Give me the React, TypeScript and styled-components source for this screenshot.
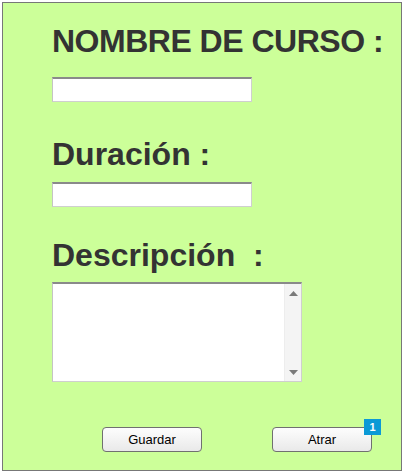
import React from 'react';
import styled, { createGlobalStyle } from 'styled-components';

const GlobalStyle = createGlobalStyle`
  body {
    margin: 0;
    background: #ffffff;
    font-family: "Liberation Sans", Arial, sans-serif;
  }
`;

const Frame = styled.div`
  margin: 2px;
  width: 400px;
  height: 469px;
  box-sizing: border-box;
  border: 1px solid #777777;
  background-color: #ccff99;
  padding: 20px 0 0 49px;
  display: flex;
  flex-direction: column;
  align-items: flex-start;
`;

const Label = styled.h2<{ $top: number; $tight?: boolean }>`
  margin: ${(p) => p.$top}px 0 0 0;
  font-size: 32px;
  line-height: 37px;
  font-weight: 700;
  color: #333333;
  white-space: pre;
  letter-spacing: ${(p) => (p.$tight ? '-0.5px' : '0')};
`;

const TextInput = styled.input<{ $top: number }>`
  margin-top: ${(p) => p.$top}px;
  width: 200px;
  height: 25px;
  box-sizing: border-box;
  padding: 0 4px;
  background: #ffffff;
  border-style: solid;
  border-width: 2px 1px 1px 1px;
  border-color: #8a8a8a #cfcfcf #cfcfcf #c4c4c4;
  outline: none;
`;

const AreaBox = styled.div`
  margin-top: 8px;
  width: 250px;
  height: 100px;
  box-sizing: border-box;
  display: flex;
  background: #ffffff;
  border-style: solid;
  border-width: 2px 1px 1px 1px;
  border-color: #8a8a8a #cfcfcf #cfcfcf #c4c4c4;
`;

const TextArea = styled.textarea`
  flex: 1;
  min-width: 0;
  border: none;
  resize: none;
  outline: none;
  background: transparent;
  padding: 2px;
  font-family: "Liberation Sans", Arial, sans-serif;
  font-size: 13px;
`;

const ScrollBar = styled.div`
  width: 16px;
  background: #f4f4f4;
  border-left: 1px solid #ededed;
  display: flex;
  flex-direction: column;
  justify-content: space-between;
  align-items: center;
  padding: 7px 0 6px;
`;

const Arrow = ({ down }: { down?: boolean }) => (
  <svg width="9" height="5" viewBox="0 0 9 5">
    <path d={down ? 'M0 0h9L4.5 5z' : 'M0 5h9L4.5 0z'} fill="#7a7a7a" />
  </svg>
);

const Actions = styled.div`
  margin: 45px 0 0 50px;
  display: flex;
  gap: 70px;
`;

const ButtonWrap = styled.div`
  position: relative;
`;

const Button = styled.button`
  width: 100px;
  height: 25px;
  box-sizing: border-box;
  border: 1px solid #707070;
  border-radius: 4px;
  background: linear-gradient(#fdfdfd, #e9e9e9);
  font-family: "Liberation Sans", Arial, sans-serif;
  font-size: 13px;
  color: #000000;
  padding: 0;
`;

const Badge = styled.span`
  position: absolute;
  top: -8px;
  right: -9px;
  width: 17px;
  height: 16px;
  background: #0b9ad6;
  color: #ffffff;
  font-size: 11px;
  font-weight: 700;
  line-height: 16px;
  text-align: center;
`;

export default function App() {
  return (
    <>
      <GlobalStyle />
      <Frame>
        <Label $top={0} $tight>NOMBRE DE CURSO :</Label>
        <TextInput $top={17} type="text" />
        <Label $top={34}>Duración :</Label>
        <TextInput $top={9} type="text" />
        <Label $top={30}>Descripción  :</Label>
        <AreaBox>
          <TextArea />
          <ScrollBar>
            <Arrow />
            <Arrow down />
          </ScrollBar>
        </AreaBox>
        <Actions>
          <ButtonWrap>
            <Button>Guardar</Button>
          </ButtonWrap>
          <ButtonWrap>
            <Button>Atrar</Button>
            <Badge>1</Badge>
          </ButtonWrap>
        </Actions>
      </Frame>
    </>
  );
}
